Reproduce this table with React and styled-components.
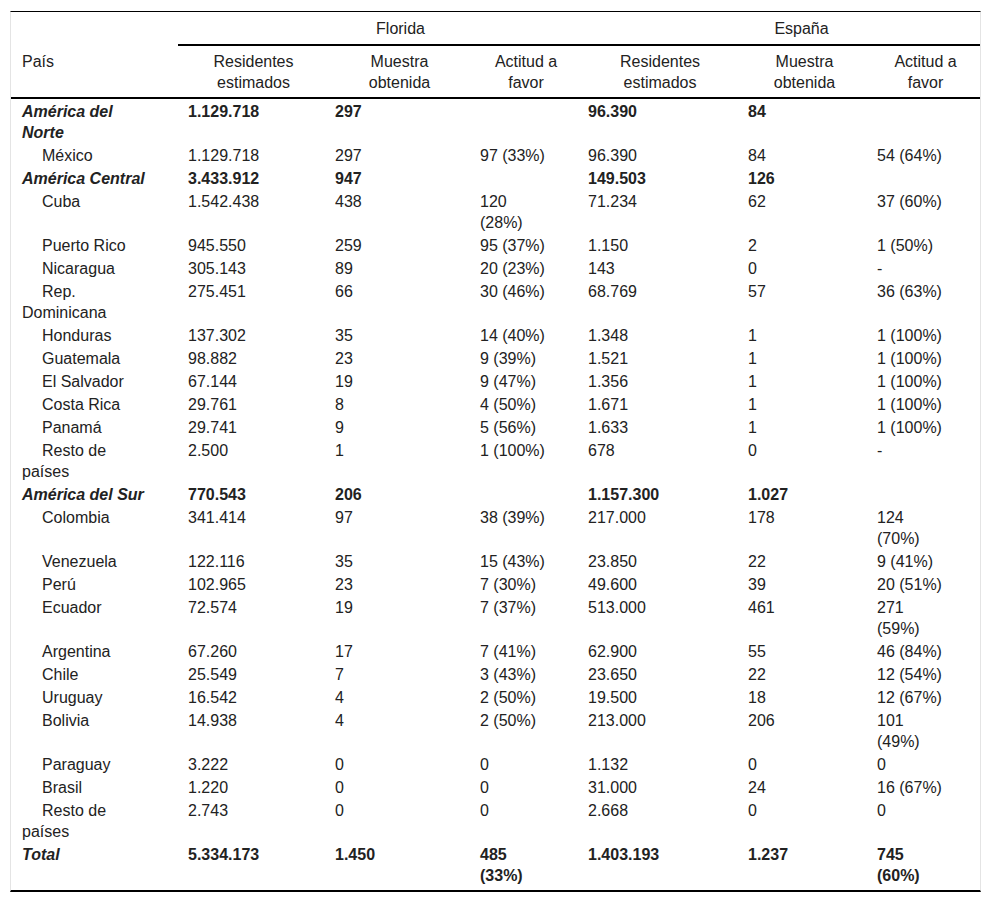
import React from 'react'
import styled, { createGlobalStyle } from 'styled-components'

const GlobalStyle = createGlobalStyle`
  body {
    margin: 0;
    background: #fff;
    font-family: "Liberation Sans", Arial, sans-serif;
    color: #222;
  }
`

const regions = [
  {
    name: 'América del Norte',
    totals: ['1.129.718', '297', '', '96.390', '84', ''],
    countries: [['México', '1.129.718', '297', '97 (33%)', '96.390', '84', '54 (64%)']],
  },
  {
    name: 'América Central',
    totals: ['3.433.912', '947', '', '149.503', '126', ''],
    countries: [
      ['Cuba', '1.542.438', '438', '120 (28%)', '71.234', '62', '37 (60%)'],
      ['Puerto Rico', '945.550', '259', '95 (37%)', '1.150', '2', '1 (50%)'],
      ['Nicaragua', '305.143', '89', '20 (23%)', '143', '0', '-'],
      ['Rep. Dominicana', '275.451', '66', '30 (46%)', '68.769', '57', '36 (63%)'],
      ['Honduras', '137.302', '35', '14 (40%)', '1.348', '1', '1 (100%)'],
      ['Guatemala', '98.882', '23', '9 (39%)', '1.521', '1', '1 (100%)'],
      ['El Salvador', '67.144', '19', '9 (47%)', '1.356', '1', '1 (100%)'],
      ['Costa Rica', '29.761', '8', '4 (50%)', '1.671', '1', '1 (100%)'],
      ['Panamá', '29.741', '9', '5 (56%)', '1.633', '1', '1 (100%)'],
      ['Resto de países', '2.500', '1', '1 (100%)', '678', '0', '-'],
    ],
  },
  {
    name: 'América del Sur',
    totals: ['770.543', '206', '', '1.157.300', '1.027', ''],
    countries: [
      ['Colombia', '341.414', '97', '38 (39%)', '217.000', '178', '124 (70%)'],
      ['Venezuela', '122.116', '35', '15 (43%)', '23.850', '22', '9 (41%)'],
      ['Perú', '102.965', '23', '7 (30%)', '49.600', '39', '20 (51%)'],
      ['Ecuador', '72.574', '19', '7 (37%)', '513.000', '461', '271 (59%)'],
      ['Argentina', '67.260', '17', '7 (41%)', '62.900', '55', '46 (84%)'],
      ['Chile', '25.549', '7', '3 (43%)', '23.650', '22', '12 (54%)'],
      ['Uruguay', '16.542', '4', '2 (50%)', '19.500', '18', '12 (67%)'],
      ['Bolivia', '14.938', '4', '2 (50%)', '213.000', '206', '101 (49%)'],
      ['Paraguay', '3.222', '0', '0', '1.132', '0', '0'],
      ['Brasil', '1.220', '0', '0', '31.000', '24', '16 (67%)'],
      ['Resto de países', '2.743', '0', '0', '2.668', '0', '0'],
    ],
  },
]

const total = ['5.334.173', '1.450', '485 (33%)', '1.403.193', '1.237', '745 (60%)']
const colWidths = [167, 147, 145, 108, 160, 129, 113]
const subHeads = ['Residentes estimados', 'Muestra obtenida', 'Actitud a favor']

const App = () => {
  return (
    <Wrapper>
      <GlobalStyle />
      <Table>
        <colgroup>
          {colWidths.map((w, i) => (
            <Col key={i} $w={w} />
          ))}
        </colgroup>
        <thead>
          <tr>
            <GroupHead />
            <GroupHead colSpan={3} $line>Florida</GroupHead>
            <GroupHead colSpan={3} $line>España</GroupHead>
          </tr>
          <tr>
            <SubHead $left>País</SubHead>
            {[...subHeads, ...subHeads].map((h, i) => (
              <SubHead key={i}>{h}</SubHead>
            ))}
          </tr>
        </thead>
        <tbody>
          {regions.map(region => (
            <React.Fragment key={region.name}>
              <tr>
                <NameCell $region>{region.name}</NameCell>
                {region.totals.map((v, i) => (
                  <Cell key={i} $bold>{v}</Cell>
                ))}
              </tr>
              {region.countries.map(([name, ...values]) => (
                <tr key={region.name + name}>
                  <NameCell>{name}</NameCell>
                  {values.map((v, i) => (
                    <Cell key={i}>{v}</Cell>
                  ))}
                </tr>
              ))}
            </React.Fragment>
          ))}
          <TotalRow>
            <NameCell $region>Total</NameCell>
            {total.map((v, i) => (
              <Cell key={i} $bold>{v}</Cell>
            ))}
          </TotalRow>
        </tbody>
      </Table>
    </Wrapper>
  )
}

export default App

const Wrapper = styled.div`
  padding: 11px 11px 11px 10px;
`

const Table = styled.table`
  width: 971px;
  table-layout: fixed;
  border-collapse: separate;
  border-spacing: 0;
  border-top: 1px solid #000;
  border-bottom: 2px solid #000;
  border-left: 1px solid #e4e4e4;
  border-right: 1px solid #e4e4e4;
  font-size: 16px;
  line-height: 21px;
`

const Col = styled.col`
  width: ${p => p.$w}px;
`

const GroupHead = styled.th`
  font-weight: normal;
  text-align: center;
  padding: 6px 0 5px 45px;
  border-bottom: ${p => (p.$line ? '2px solid #000' : 'none')};
`

const SubHead = styled.th`
  font-weight: normal;
  text-align: ${p => (p.$left ? 'left' : 'center')};
  vertical-align: top;
  padding: ${p => (p.$left ? '5px 4px 4px 11px' : '5px 16px 4px 20px')};
  border-bottom: 2px solid #000;
`

const Cell = styled.td`
  vertical-align: top;
  padding: 2px 30px 0 10px;
  font-weight: ${p => (p.$bold ? 'bold' : 'normal')};
  &:last-child {
    padding-right: 35px;
  }
`

const NameCell = styled.td`
  vertical-align: top;
  padding: 2px 30px 0 11px;
  font-weight: ${p => (p.$region ? 'bold' : 'normal')};
  font-style: ${p => (p.$region ? 'italic' : 'normal')};
  text-indent: ${p => (p.$region ? '0' : '20px')};
`

const TotalRow = styled.tr`
  & > td {
    padding-bottom: 4px;
  }
`
